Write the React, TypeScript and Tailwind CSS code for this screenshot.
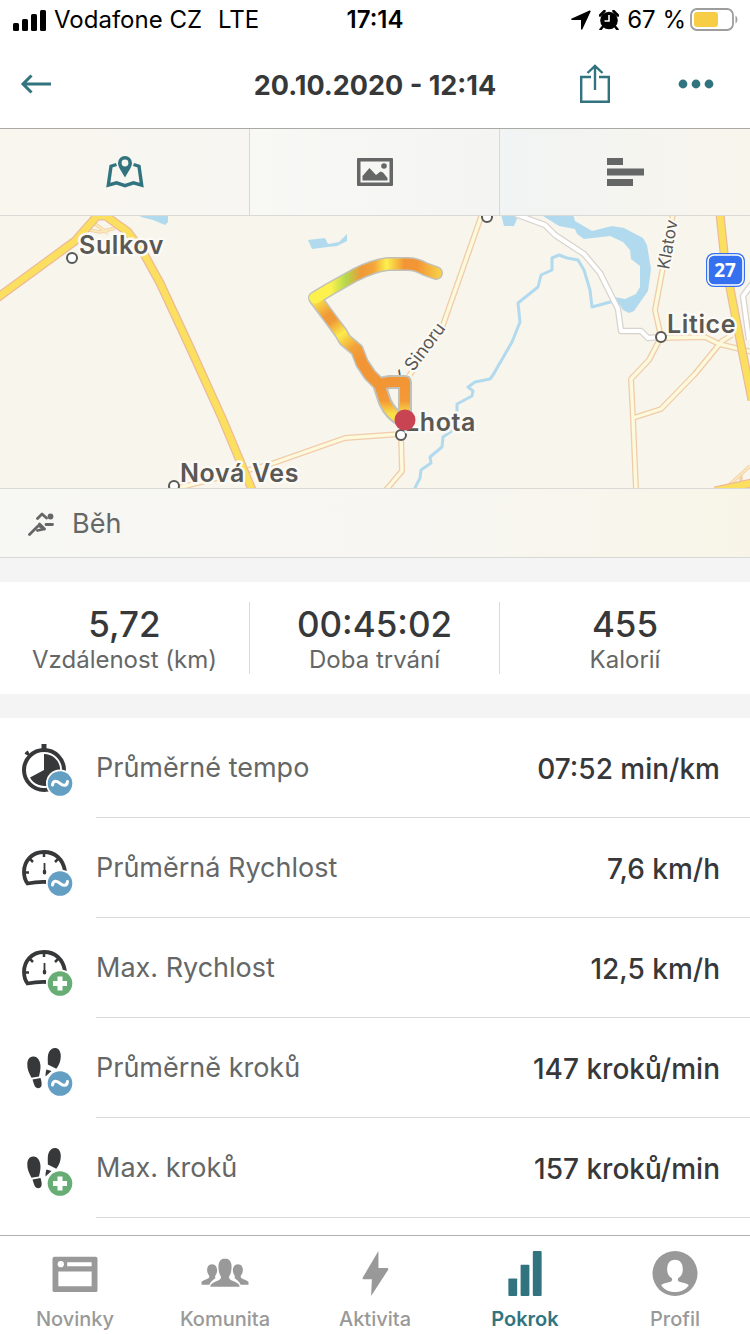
import type { ReactNode } from "react";

const tabs = [
  { id: "map", label: "Mapa", icon: <MapIcon />, color: "text-[#31747f]", bg: "bg-linear-to-r from-[#f9f6ee] to-[#f7f6f2]" },
  { id: "photo", label: "Fotky", icon: <PhotoIcon />, color: "text-[#656767]", bg: "bg-linear-to-r from-[#f8f8f5] to-[#f4f4f2]" },
  { id: "chart", label: "Grafy", icon: <BarsIcon />, color: "text-[#656767]", bg: "bg-linear-to-r from-[#f1f4f4] to-[#f8f5ec]" },
];

const summary = [
  { label: "Vzdálenost (km)", value: "5,72" },
  { label: "Doba trvání", value: "00:45:02" },
  { label: "Kalorií", value: "455" },
];

const details = [
  { label: "Průměrné tempo", value: "07:52 min/km", icon: <Stopwatch />, badge: <AvgBadge /> },
  { label: "Průměrná Rychlost", value: "7,6 km/h", icon: <Gauge />, badge: <AvgBadge /> },
  { label: "Max. Rychlost", value: "12,5 km/h", icon: <Gauge />, badge: <MaxBadge /> },
  { label: "Průměrně kroků", value: "147 kroků/min", icon: <Steps />, badge: <AvgBadge /> },
  { label: "Max. kroků", value: "157 kroků/min", icon: <Steps />, badge: <MaxBadge /> },
];

const navItems = [
  { label: "Novinky", icon: <NewsIcon /> },
  { label: "Komunita", icon: <PeopleIcon /> },
  { label: "Aktivita", icon: <BoltIcon /> },
  { label: "Pokrok", icon: <ProgressIcon />, active: true },
  { label: "Profil", icon: <ProfileIcon /> },
];

/* ---------- Ikony záložek ---------- */

function MapIcon() {
  return (
    <svg width="38" height="32" viewBox="0 0 38 32" fill="none">
      <path d="M10.5 8.500 5 10.200 2.300 29.200 10.500 26.800 19 29.700 27.500 26.800 35.700 29.200 33 10.200 27.500 8.500" stroke="currentColor" strokeWidth="3.400" />
      <path fill="currentColor" fillRule="evenodd" d="M19 0a7 7 0 0 0-7 7c0 4 4 9 7 14.500C22 16 26 11 26 7a7 7 0 0 0-7-7Zm0 3.600a3.400 3.400 0 1 1 0 6.800 3.400 3.400 0 0 1 0-6.800Z" />
    </svg>
  );
}

function PhotoIcon() {
  return (
    <svg width="36" height="28" viewBox="0 0 36 28">
      <path fill="currentColor" fillRule="evenodd" d="M1 0h34a1 1 0 0 1 1 1v26a1 1 0 0 1-1 1H1a1 1 0 0 1-1-1V1a1 1 0 0 1 1-1Zm2.500 3.500v21h29v-21Z" />
      <path fill="currentColor" d="M5.500 22.500V18l7-8 6.500 7 4.500-3.500 2.500 1L30.500 20v2.500Z" />
      <circle cx="27" cy="8" r="2.800" fill="currentColor" />
    </svg>
  );
}

function BarsIcon() {
  return (
    <svg width="37" height="28" viewBox="0 0 37 28" fill="currentColor">
      <path d="M0 0h16v7H0zM0 10.500h37v7H0zM0 21h26v7H0z" />
    </svg>
  );
}

/* ---------- Ikony statistik ---------- */

function Stopwatch() {
  return (
    <g fill="none" stroke="#373839">
      <circle cx="44" cy="52" r="20" strokeWidth="4" />
      <path d="M44 26v6" strokeWidth="5" />
      <path d="M26.500 34.500l3 3M28.200 33.400l-2.800 2.800" strokeWidth="2.500" />
      <path d="M44 52V36a16 16 0 1 1-14 23.500Z" fill="#373839" stroke="none" />
    </g>
  );
}

function Gauge() {
  return (
    <g fill="none" stroke="#373839">
      <path d="M65 53C63 41 55 34 44 34 32 34 24 43 24 54c0 5 1 8 3.500 11.500 6-1.200 12-1.700 18.500-1.500" strokeWidth="3.800" />
      <path d="M44 34v5M24.500 54.500H29M30 41l3 3M58 41l-3 3" strokeWidth="2.500" />
      <path d="M44.500 45v8" strokeWidth="1.800" />
      <ellipse cx="44.500" cy="54" rx="1.800" ry="2.500" fill="#373839" stroke="none" />
    </g>
  );
}

function Steps() {
  return (
    <g fill="#373839">
      <path d="M33 38.500c4.500-.5 7.500 4.500 7.500 10 0 4-.8 6.500-1.500 10l-7.500 1.200C29 55 27 51 27.300 46c.2-4.500 2-7.200 5.700-7.500Z" />
      <path d="M32.500 61.500l8-1.500c.8 3 1.500 5 1 7.500-.8 3.500-5.500 3.500-7 0-1-2.300-1.200-4-2-6Z" />
      <path d="M55.500 30c-4.500-.5-7.500 4-7.700 9.500-.2 3 .2 4 0 7l8.500 4.300c2.700-3.800 4.500-7.500 4.500-12.500 0-4.800-1.800-8-5.300-8.300Z" />
      <path d="M46.500 51.500l5 1.500-6 5.500c0-3 .2-5 1-7Z" />
    </g>
  );
}

function AvgBadge() {
  return (
    <g>
      <circle cx="60" cy="65.500" r="14" fill="#fff" />
      <circle cx="60" cy="65.500" r="12.300" fill="#639fc3" />
      <path d="M52.500 67c.5-5 4.500-4.500 7.500-1.700s7 3.200 7.500-1.800" fill="none" stroke="#fff" strokeWidth="3" strokeLinecap="round" />
    </g>
  );
}

function MaxBadge() {
  return (
    <g>
      <circle cx="60" cy="65.500" r="14" fill="#fff" />
      <circle cx="60" cy="65.500" r="12.300" fill="#67ad74" />
      <path d="M60 58.500v14M53 65.500h14" stroke="#fff" strokeWidth="5" />
    </g>
  );
}

/* ---------- Ikony spodní navigace ---------- */

function NewsIcon() {
  return (
    <svg width="46" height="46" viewBox="0 0 46 46">
      <rect y="6" width="46" height="36" rx="2" fill="currentColor" />
      <circle cx="8.500" cy="13.500" r="3.200" fill="#fff" />
      <path d="M15 11.500h25v4H15zM6 21h34v15H6z" fill="#fff" />
    </svg>
  );
}

function PeopleIcon() {
  return (
    <svg width="48" height="46" viewBox="0 0 48 46" fill="currentColor">
      <path d="M0 34.500v-2.800c1.500-2.500 6-2.500 7.800-4.700.5-.8 0-2-.8-3-2-2.500-2.200-10.500 3.800-10.500 5.800 0 6 7.800 4 10.500-1 1.400-1.300 2.400-.5 3.500-2 1.500-5 3.500-6.300 7Z" />
      <path d="M48 34.500v-2.800c-1.500-2.500-6-2.500-7.800-4.700-.5-.8 0-2 .8-3 2-2.500 2.200-10.500-3.800-10.500-5.800 0-6 7.800-4 10.500 1 1.400 1.300 2.400.5 3.500 2 1.500 5 3.500 6.300 7Z" />
      <path d="M9 36.500c0-5.500 9.500-5 10.800-9 .5-1.800-1.300-3-1.800-5.500-1-4-1.200-9.500 1-12C20.200 8.200 22 8 24 8s3.800.2 5 2c2.200 2.500 2 8 1 12-.5 2.500-2.300 3.700-1.800 5.500C29.500 31.500 39 31 39 36.500Z" />
    </svg>
  );
}

function BoltIcon() {
  return (
    <svg width="27" height="46" viewBox="0 0 27 46" fill="currentColor">
      <path d="M16.500 0 .5 27c-.6 1 0 2 1 2h8.300L9 46 26.300 19.500c.6-1 .2-2-1-2h-8.800Z" />
    </svg>
  );
}

function ProgressIcon() {
  return (
    <svg width="34" height="46" viewBox="0 0 34 46" fill="currentColor">
      <rect y="28" width="9" height="18" rx="1" />
      <rect x="12.500" y="14" width="9" height="32" rx="1" />
      <rect x="25" width="9" height="46" rx="1" />
    </svg>
  );
}

function ProfileIcon() {
  return (
    <svg width="46" height="46" viewBox="0 0 46 46">
      <circle cx="23" cy="23" r="23" fill="currentColor" />
      <path fill="#fff" d="M23 9c-5.500 0-8 4-8 10 0 4.500 2 7 4.500 8.500.8.500.8 3-.5 3.800-2.500 1.500-9 1.400-10 4C13 40.500 18 42 23 42s10-1.500 14-6.700c-1-2.600-7.500-2.500-10-4-1.300-.8-1.300-3.300-.5-3.800C29 26 31 23.500 31 19c0-6-2.500-10-8-10Z" />
    </svg>
  );
}

/* ---------- Mapa ---------- */

const minorRoads = [
  "M482 214 443 325 405 382",
  "M401 434 345 438 268 465 178 488",
  "M401 436 402 471 386 490",
  "M673 214 655 310 661 337 649 360 631 379 633 418 636 490",
  "M633 418 661 409 695 374 722 341 732 335",
  "M661 338 705 337 719 344 752 352",
];

const whiteRoads = "M515 214 545 225 555 235 584 254 600 273 618 309 621 331 641 331 648 338 661 337M752 284 743 296 749 340";

const mainRoads =
  "M-3 298 75 241 97 216 106 216 128 232 144 254 160 283 188 343 222 418 253 492M720 214 725 262 740 340 752 400M715 491 752 483";

function Town({ x, y, name, labelX, labelY }: { x: number; y: number; name: string; labelX: number; labelY: number }) {
  return (
    <g>
      <circle cx={x} cy={y} r="5" fill="#fff" stroke="#595854" strokeWidth="2" />
      <text x={labelX} y={labelY} fontSize="25" className="tracking-wide" fontWeight="600" fill="#595854" stroke="#fcfaf5" strokeWidth="5" paintOrder="stroke" strokeLinejoin="round">
        {name}
      </text>
    </g>
  );
}

function RouteMap() {
  return (
    <svg className="block h-[272px] w-full bg-[#f8f5ec]" viewBox="0 216 750 272" preserveAspectRatio="xMidYMid slice" role="img" aria-label="Trasa běhu">
      <defs>
        <linearGradient id="legTop" gradientUnits="userSpaceOnUse" x1="440" y1="0" x2="313" y2="0">
          <stop offset="0" stopColor="#f8cf46" />
          <stop offset=".08" stopColor="#f5b53f" />
          <stop offset=".18" stopColor="#f29535" />
          <stop offset=".28" stopColor="#f29535" />
          <stop offset=".42" stopColor="#fdf04c" />
          <stop offset=".52" stopColor="#f3a63a" />
          <stop offset=".62" stopColor="#ef9838" />
          <stop offset=".74" stopColor="#b3d84b" />
          <stop offset=".86" stopColor="#fdf24d" />
          <stop offset="1" stopColor="#fdf24d" />
        </linearGradient>
        <linearGradient id="legLeft" gradientUnits="userSpaceOnUse" x1="313" y1="298" x2="379" y2="385">
          <stop offset="0" stopColor="#fdf24d" />
          <stop offset=".2" stopColor="#f09a37" />
          <stop offset=".28" stopColor="#f09a37" />
          <stop offset=".42" stopColor="#fbec4b" />
          <stop offset=".58" stopColor="#f2a33a" />
          <stop offset=".7" stopColor="#f29535" />
          <stop offset="1" stopColor="#f29535" />
        </linearGradient>
        <linearGradient id="legLoop" gradientUnits="userSpaceOnUse" x1="0" y1="382" x2="0" y2="420">
          <stop offset="0" stopColor="#f29535" />
          <stop offset=".5" stopColor="#f39a37" />
          <stop offset=".85" stopColor="#fae048" />
        </linearGradient>
      </defs>

      {/* Voda */}
      <g fill="#b2daee">
        <path d="M139 214h29v8l-3 3-12-5-12-3ZM308 240l17-2 3 6 11-2 8-8v7l-10 5-9 1-16 2ZM501 214l15 2 1 3-3 7h-10Z" />
        <path d="M524 214h49l2 7 17 10 20-5 12 2 19 10 4 7 4 24-3 22-14 20-5 2-6-3-3-5h-7l1-8 11 2 11-5 4-7v-21l-9-7-1-9-7-8-13-6-26 3-7-5-2-5-16-3-16-10Z" />
      </g>
      <path
        d="M614 301 592 307 590 290 584 270 578 260 567 258 559 255 552 258 552 270 541 275 538 287 518 303 520 322 512 342 493 375 490 379 475 382 468 387 473 391 472 396 457 404 457 412 453 430 443 437 442 447 430 457 431 463 421 470 420 478 414 490"
        fill="none"
        stroke="#b2daee"
        strokeWidth="3"
        strokeLinejoin="round"
      />

      {/* Vedlejší silnice */}
      <g fill="none" strokeLinejoin="round">
        <path d={whiteRoads} stroke="#d8d4cd" strokeWidth="6.500" />
        <path d={whiteRoads} stroke="#fff" strokeWidth="4" />
        {minorRoads.map((d) => (
          <path key={d} d={d} stroke="#f0cdaa" strokeWidth="6" />
        ))}
        {minorRoads.map((d) => (
          <path key={d} d={d} stroke="#fdf9dc" strokeWidth="3.400" />
        ))}
        <path d="M84 229 100 232 115 228M92 222 108 233M728 486 750 466M741 474V484" stroke="#f2d1ae" strokeWidth="3.500" />
        <path d="M84 229 100 232 115 228M92 222 108 233M728 486 750 466" stroke="#fcebb5" strokeWidth="1.600" />
      </g>

      {/* Hlavní silnice */}
      <g fill="none" strokeLinejoin="round">
        <path d={mainRoads} stroke="#edbb98" strokeWidth="9" />
        <path d={mainRoads} stroke="#fbe05f" strokeWidth="6.500" />
      </g>

      {/* Popisky */}
      <g fontFamily="Inter, sans-serif">
        <g fontSize="18" fill="#595854" stroke="#fcfaf5" strokeWidth="4" paintOrder="stroke" strokeLinejoin="round">
          <text transform="translate(403 386) rotate(-53)">K Sinoru</text>
          <text fontSize="17" transform="translate(669 270) rotate(-80)">Klatov</text>
        </g>
        <circle cx="487" cy="217" r="5" fill="#fff" stroke="#595854" strokeWidth="2" />
        <Town x={72} y={258} name="Sulkov" labelX={79} labelY={254} />
        <Town x={661} y={337} name="Litice" labelX={667} labelY={333} />
        <Town x={174} y={486} name="Nová Ves" labelX={180} labelY={482} />
        <Town x={401} y={435} name="Lhota" labelX={405} labelY={431} />
      </g>

      {/* Trasa */}
      <g fill="none" strokeLinecap="round" strokeLinejoin="round">
        <path d="M436 273 425 269Q416 264 408 264L388 264Q372 266 355 275L330 289 315 298 341 333 345 340 357 350 362 363 370 375 379 384 385 402Q391 415 402 420M379 384 390 382 405 382 405 416" stroke="#c2c1b8" strokeWidth="14" />
        <path d="M379 384 390 382 405 382 405 416M379 384 385 402Q391 415 402 420" stroke="url(#legLoop)" strokeWidth="10" />
        <path d="M315 298 341 333 345 340 357 350 362 363 370 375 379 384" stroke="url(#legLeft)" strokeWidth="11" />
        <path d="M436 273 425 269Q416 264 408 264L388 264Q372 266 355 275L330 289 315 298" stroke="url(#legTop)" strokeWidth="11" />
      </g>
      <circle cx="405" cy="420" r="10.500" fill="#c84453" />

      <g>
        <rect x="706" y="253" width="39" height="34" rx="8" fill="#3570f0" />
        <rect x="708" y="255" width="35" height="30" rx="6" fill="none" stroke="#fff" strokeWidth="1.600" />
        <text x="725" y="277" textAnchor="middle" fontFamily="Noto Sans, sans-serif" fontSize="19" fontWeight="700" fill="#fff">27</text>
      </g>
    </svg>
  );
}

/* ---------- Části stránky ---------- */

function StatusBar() {
  return (
    <div className="grid h-10 grid-cols-[1fr_auto_1fr] items-center px-3 text-[24px] text-black">
      <div className="flex items-center gap-2">
        <svg width="34" height="22" viewBox="0 0 34 22">
          <rect x="1" y="14" width="6" height="8" rx="1.500" />
          <rect x="10" y="10" width="6" height="12" rx="1.500" />
          <rect x="19" y="5" width="6" height="17" rx="1.500" />
          <rect x="28" y="1" width="6" height="21" rx="1.500" />
        </svg>
        <span>Vodafone CZ</span>
        <span className="ml-2">LTE</span>
      </div>
      <span className="font-semibold">17:14</span>
      <div className="flex items-center justify-end gap-2">
        <svg width="20" height="20" viewBox="0 0 20 20">
          <path d="M18.500.5C19.300.2 20 .8 19.500 1.700L11.500 19c-.5 1-1.500.8-1.500-.3V10H1.200C0 10-.2 9 .8 8.600Z" />
        </svg>
        <svg width="20" height="20" viewBox="0 0 20 20">
          <circle cx="10" cy="10.500" r="8.800" />
          <path d="M1 5.500 5.500 1M19 5.500 14.500 1M3.500 17 1.500 19.500M16.500 17l2 2.500" stroke="#000" strokeWidth="2.500" strokeLinecap="round" />
          <path d="M10 5v6H5.500" stroke="#fff" strokeWidth="1.600" fill="none" />
        </svg>
        <span className="whitespace-nowrap">67 %</span>
        <svg width="48" height="24" viewBox="0 0 48 24" className="-ml-1">
          <rect x="1" y="1" width="42" height="21" rx="6" fill="none" stroke="#9d9d9d" strokeWidth="1.800" />
          <rect x="4" y="4" width="24" height="15" rx="3" fill="#f8cd46" />
          <path d="M45.500 7.500c2.500 1.500 2.500 6.500 0 8Z" fill="#9d9d9d" />
        </svg>
      </div>
    </div>
  );
}

function Header() {
  return (
    <header className="grid h-[88px] grid-cols-[1fr_auto_1fr] items-center px-5 text-[#31747f]">
      <button type="button" aria-label="Zpět" className="justify-self-start">
        <svg width="32" height="20" viewBox="0 0 32 20" fill="none" stroke="currentColor" strokeWidth="3">
          <path d="M31 10H3M11.500 1.500 3 10l8.500 8.500" />
        </svg>
      </button>
      <h1 className="pt-1 text-[27px] font-bold text-[#373839]">20.10.2020 - 12:14</h1>
      <div className="flex items-center justify-end gap-[68px] pr-4">
        <button type="button" aria-label="Sdílet">
          <svg width="30" height="40" viewBox="0 0 30 40" fill="none" stroke="currentColor" strokeWidth="2.400">
            <path d="M11 13H1.200v24.800h27.600V13H19M15 26V2M7.500 9 15 1.800 22.500 9" />
          </svg>
        </button>
        <button type="button" aria-label="Další možnosti">
          <svg width="36" height="10" viewBox="0 0 36 10" fill="currentColor">
            <circle cx="5" cy="5" r="4.400" />
            <circle cx="18" cy="5" r="4.400" />
            <circle cx="31" cy="5" r="4.400" />
          </svg>
        </button>
      </div>
    </header>
  );
}

function DetailRow({ label, value, children }: { label: string; value: string; children: ReactNode }) {
  return (
    <div className="flex">
      <div className="flex w-24 shrink-0 items-center pl-5">
        <svg width="56" height="56" viewBox="20 22 56 56" aria-hidden="true">
          {children}
        </svg>
      </div>
      <div className="flex h-[100px] flex-1 items-center justify-between border-b border-[#d9dadb] pt-0.5 pr-[30px]">
        <dt className="text-[27px] text-[#656767]">{label}</dt>
        <dd className="text-[28px] font-medium text-[#373839]">{value}</dd>
      </div>
    </div>
  );
}

export default function App() {
  return (
    <div className="flex min-h-screen flex-col bg-white font-['Inter',sans-serif]">
      <StatusBar />
      <Header />

      <main className="flex flex-1 flex-col">
        <div className="grid grid-cols-3 border-t border-b border-t-[#a9a9a6] border-b-[#d9d9d6]">
          {tabs.map((tab) => (
            <button key={tab.id} type="button" aria-label={tab.label} className={`flex h-[86px] items-center justify-center border-r border-[#d9d9d6] last:border-r-0 ${tab.color} ${tab.bg}`}>
              {tab.icon}
            </button>
          ))}
        </div>

        <RouteMap />

        <div className="flex h-[70px] items-center gap-[18px] border-y border-[#d9d9d6] bg-linear-to-r from-[#f7f7f4] via-[#f7f6f3] to-[#f8f5e8] pl-7 text-[#656767]">
          <svg width="26" height="26" viewBox="0 0 26 26" fill="none" stroke="currentColor" strokeWidth="2.800" strokeLinecap="round" strokeLinejoin="round">
            <path d="M1.500 24.500 10 16M9.500 8.500 14 4l4.500 4M11.500 14l5 5-7 1.500M11.500 16l5 3M18 14.500h6.500" />
            <circle cx="22.500" cy="6.500" r="1.500" fill="currentColor" />
          </svg>
          <span className="pt-0.5 text-[27px]">Běh</span>
        </div>

        <div className="h-6 bg-[#f4f4f4]" />

        <dl className="grid grid-cols-3 py-5">
          {summary.map((item) => (
            <div key={item.label} className="flex h-[72px] flex-col-reverse items-center justify-center border-r border-[#d9dadb] last:border-r-0">
              <dt className="text-[24px] leading-7 text-[#656767]">{item.label}</dt>
              <dd className="text-[35px] leading-[44px] font-medium text-[#373839]">{item.value}</dd>
            </div>
          ))}
        </dl>

        <div className="h-6 bg-[#f4f4f4]" />

        <dl className="flex-1">
          {details.map((item) => (
            <DetailRow key={item.label} label={item.label} value={item.value}>
              {item.icon}
              {item.badge}
            </DetailRow>
          ))}
        </dl>
      </main>

      <nav className="sticky bottom-0 grid grid-cols-5 border-t border-[#b0b0b0] bg-white">
        {navItems.map((item) => (
          <a key={item.label} href="#" className={`flex h-[98px] flex-col items-center gap-2 pt-[15px] text-[20px] ${item.active ? "font-semibold text-[#31747f]" : "font-medium text-[#999]"}`}>
            {item.icon}
            {item.label}
          </a>
        ))}
      </nav>
    </div>
  );
}
